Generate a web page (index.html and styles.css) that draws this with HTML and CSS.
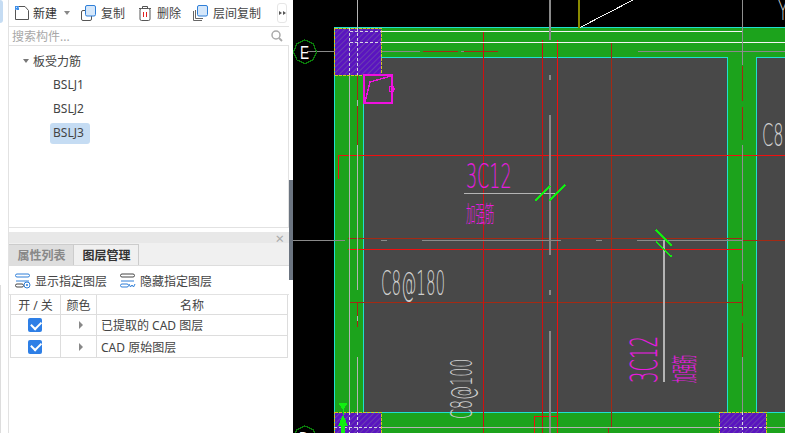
FILE: index.html
```html
<!DOCTYPE html>
<html lang="zh">
<head>
<meta charset="utf-8">
<title>图层管理</title>
<link rel="stylesheet" href="styles.css">
</head>
<body>
<div class="app">
  <aside class="side">
    <div class="rail"><div class="rail-sel"></div><div class="rail-line"></div></div>
    <div class="panel">
      <div class="toolbar">
        <button class="tool t-new">
          <svg width="16" height="16" viewBox="0 0 16 16"><path d="M1.500 3.500V14.500H14.500V5.500L11 1.500H5" fill="#fff" stroke="#555"/><path d="M1 1h4v4H1z" fill="#3f8fe8"/><path d="M2 2h1v1H2zM4 2h.5v1H4zM2 4h1v.5H2z" fill="#cfe4fa"/></svg>
          <span>新建</span><i class="caret"></i>
        </button>
        <button class="tool t-copy">
          <svg width="16" height="16" viewBox="0 0 16 16"><rect x="1.500" y="5.500" width="10" height="10" rx="1.500" fill="#fff" stroke="#555"/><rect x="5.500" y="0.500" width="10" height="10.500" rx="1.500" fill="#d5e7fa" stroke="#2f7fd8"/></svg>
          <span>复制</span>
        </button>
        <button class="tool t-del">
          <svg width="14" height="16" viewBox="0 0 14 16"><path d="M1 3.500H13M4.500 3V1.500H9.500V3" fill="none" stroke="#555"/><rect x="2" y="3.500" width="10" height="12" rx="1.500" fill="#fff" stroke="#555"/><path d="M5.500 7v5M8.500 7v5" stroke="#e02020"/></svg>
          <span>删除</span>
        </button>
        <button class="tool t-floor">
          <svg width="16" height="16" viewBox="0 0 16 16"><path d="M1.500 6V15.500H10M3.500 5V13.500H11" fill="none" stroke="#666"/><rect x="5.500" y="0.500" width="10" height="10.500" rx="1.500" fill="#d5e7fa" stroke="#2f7fd8"/></svg>
          <span>层间复制</span>
        </button>
        <div class="more"><i></i><i></i></div>
      </div>
      <div class="search">
        <span>搜索构件...</span>
        <svg width="12" height="12" viewBox="0 0 12 12"><circle cx="5" cy="5" r="4" fill="none" stroke="#aaa" stroke-width="1.500"/><path d="M8 8l3 3" stroke="#aaa" stroke-width="1.800"/></svg>
      </div>
      <div class="tree">
        <div class="tree-root"><i class="tree-caret"></i><span>板受力筋</span></div>
        <div class="leaf">BSLJ1</div>
        <div class="leaf">BSLJ2</div>
        <div class="leaf leaf-sel">BSLJ3</div>
      </div>
      <div class="gap"></div>
      <div class="dock-head"><span class="close">×</span></div>
      <div class="tabs">
        <div class="tab">属性列表</div>
        <div class="tab tab-on">图层管理</div>
      </div>
      <div class="layer-tools">
        <div class="ltool">
          <svg width="16" height="16" viewBox="0 0 16 16"><rect x="0.500" y="1" width="14" height="3" rx="1.500" fill="none" stroke="#2f7fd8"/><path d="M1 8h13" stroke="#2f7fd8"/><rect x="0.500" y="11" width="8" height="3" rx="1.500" fill="none" stroke="#444"/><circle cx="12" cy="12" r="3" fill="#fff" stroke="#2f7fd8"/><circle cx="12" cy="12" r="1" fill="#2f7fd8"/></svg>
          <span>显示指定图层</span>
        </div>
        <div class="ltool">
          <svg width="16" height="16" viewBox="0 0 16 16"><rect x="0.500" y="1" width="14" height="3" rx="1.500" fill="none" stroke="#444"/><path d="M1 8h13" stroke="#2f7fd8"/><rect x="0.500" y="11" width="8" height="3" rx="1.500" fill="none" stroke="#2f7fd8"/><path d="M9 11l1.500 3 1.500-2 1.500 2 1.500-3" fill="none" stroke="#2f7fd8"/></svg>
          <span>隐藏指定图层</span>
        </div>
      </div>
      <div class="grid">
        <div class="cell head">开 / 关</div><div class="cell head">颜色</div><div class="cell head">名称</div>
        <div class="cell"><span class="check"></span></div><div class="cell"><i class="arrow"></i></div><div class="cell name">已提取的 CAD 图层</div>
        <div class="cell"><span class="check"></span></div><div class="cell"><i class="arrow"></i></div><div class="cell name">CAD 原始图层</div>
      </div>
    </div>
    <div class="splitter"><i></i></div>
  </aside>
  <main class="cad">
    <svg class="drawing" width="492" height="433" viewBox="293 0 492 433">
      <defs>
        <pattern id="hatch" width="4" height="4" patternUnits="userSpaceOnUse" patternTransform="rotate(-45)">
          <rect width="4" height="4" fill="#5a14c0"/><rect width="4" height="1" fill="#6a3eb0"/>
        </pattern>
      </defs>
      <!-- slabs -->
      <rect x="363" y="57" width="365" height="376" fill="#484848"/>
      <rect x="757" y="57" width="28" height="376" fill="#484848"/>
      <!-- beams -->
      <path d="M334.500 433V28H785V57H756.500V412H785V433ZM363 57V412H727.500V57Z" fill="#1ca31c" fill-rule="evenodd"/>
      <g class="lines">
        <path class="cyan" d="M334.500 433V27.500H785M785 57.500H756.500V412.500H785M727.500 57.500V412.500H363.500V57.500H727.500"/>
        <!-- dark red under-lines -->
        <path class="dred" d="M423 51.500h35M464 51.500h34M638 51.500h35M679 51.500h35"/>
        <path class="dred" d="M611.500 42v385M348 238.500h394M742 240.500h43M349 302.500h393"/>
        <path class="dred" d="M357.500 65v80M357.500 302v25M742.500 66v35M742.500 107v33M742.500 284v32M742.500 323v34M608.500 427v6"/>
        <path class="red" d="M483.500 31.500h24M338.500 178.500V155.500H785M348 249.500h394M557.500 40v393M534.500 433v-17h23"/>
        <path class="red thin" d="M483.500 31v402M542.500 40v393"/>
        <!-- white and grey lines -->
        <path class="white" d="M381 31.500h361M381 42.500h404"/>
        <path class="grey" d="M307 51.500h113M461 51.500h3M638 51.500h147"/>
        <path class="grey" d="M293 240.500h52M381 240.500h6M422 240.500h139M596 240.500h6M637 240.500h105"/>
        <path class="greyv" d="M550 0v40M550 75v5M550 115v140M550 290v5M550 331v102"/>
        <path class="greyt" d="M742.500 0v65M742.500 145v136M742.500 357v76"/>
        <path class="light" d="M349.500 28v405M357.500 0v65M357.500 100v6M357.500 145v145M357.500 316v5M357.500 357v76"/>
        <path class="light wide" d="M664 240v142"/>
        <path class="light" d="M464 193.500h93M334 427.500h451"/>
        <path class="olive" d="M579 0v28"/>
        <path class="white" d="M580 27.500L633 0"/>
        <!-- columns -->
        <g class="col">
          <rect x="334.500" y="28.500" width="46.500" height="46.500"/>
          <rect x="334.500" y="412.500" width="46.500" height="30"/>
          <rect x="719.500" y="412.500" width="46.500" height="30"/>
        </g>
        <path class="dash" d="M349.500 31.500h32M349.500 42.500h32M349.500 28v47M357.500 28v47M349.500 412v21M357.500 412v21M334 427.500h47M719 427.500h47M742.500 412v21"/>
        <!-- green ticks -->
        <path class="tick" d="M535 201l15-15M549 201l16-16M656 230l16 16M656 241.500l16 15.500"/>
        <!-- magenta leader -->
        <rect class="box" x="364" y="75" width="28" height="28"/>
        <path class="mag" d="M365 102L370 82L391 76M389.500 86.500h3.500v5h-3.500zM393 89h2"/>
        <!-- axis bubbles -->
        <path class="axis" d="M305 40l8 3.500 3.500 8.500-3.500 8-8 3.500-8-3.500-3.500-8 3.500-8.500z"/>
        <path class="axis" d="M305 426l8 3.500 3.500 8.500-3.500 8-8 3.500-8-3.500-3.500-8 3.500-8.500z"/>
      </g>
      <text class="ax" transform="translate(300 59) scale(.8 1.100)">E</text>
      <text class="ax" transform="translate(299 445) scale(.8 1.100)">D</text>
      <!-- CAD text -->
      <text class="cadt magt" transform="translate(466 188) scale(.97 1.870)">3C12</text>
      <text class="cadc" transform="translate(466 222) scale(.47 1.150)">加强筋</text>
      <text class="cadt gryt" transform="translate(381 295) scale(.84 1.850)">C8@180</text>
      <text class="cadt gryt" transform="translate(472 419) rotate(-90) scale(.79 1.660)">C8@100</text>
      <text class="cadt magt" transform="translate(657 383) rotate(-90) scale(1 2.060)">3C12</text>
      <text class="cadc" transform="translate(694 383) rotate(-90) scale(.47 1.300)">加强筋</text>
      <text class="cadt gryt" transform="translate(762 146) scale(.9 1.800)">C8</text>
      <text class="cadt gryt" transform="translate(778 20) scale(.9 1.500)">Y</text>
      <!-- UCS arrow -->
      <path class="ucs" d="M339 403l4 6 4-6M343 409v6M343 416l-4 9h2.500v8h3v-8h2.500z"/>
    </svg>
  </main>
</div>
</body>
</html>
```

FILE: styles.css
```css
* { box-sizing: border-box; }
html, body { margin: 0; padding: 0; width: 785px; height: 433px; overflow: hidden; background: #000; }
body { font-family: "Noto Sans", "Noto Sans CJK SC", sans-serif; font-size: 12px; color: #333; }
.app { display: flex; width: 785px; height: 433px; }

.side { width: 293px; flex: none; display: flex; background: #fff; position: relative; }
.rail { width: 9px; flex: none; display: flex; flex-direction: column; border-right: 1px solid #e2e2e2; }
.rail-sel { width: 3px; height: 23px; background: #c5dcf3; border-radius: 0 3px 3px 0; }
.rail-line { width: 1px; margin: 262px 0 0 0; flex: 1; background: #ddd; }
.panel { width: 280px; flex: none; display: flex; flex-direction: column; }
.splitter { flex: 1; padding-top: 180px; }
.splitter i { display: block; width: 4px; height: 100px; background: #6b7480; }

.toolbar { height: 27px; flex: none; display: flex; align-items: center; border-bottom: 1px solid #e2e2e2; }
.tool { border: 0; background: none; padding: 0; display: flex; align-items: center; font: inherit; color: #444; height: 26px; }
.tool span { line-height: 16px; padding-top: 2px; }
.t-new { margin-left: 5px; }
.t-new span { margin-left: 3px; color: #333; }
.caret { width: 0; height: 0; margin-left: 7px; border: 3px solid transparent; border-top: 4px solid #888; border-bottom: 0; }
.t-copy { margin-left: 10px; }
.t-copy span { margin-left: 5px; }
.t-del { margin-left: 13px; }
.t-del span { margin-left: 5px; }
.t-floor { margin-left: 11px; }
.t-floor span { margin-left: 5px; }
.more { width: 10px; height: 20px; margin-left: 16px; border: 1px solid #e6e6e6; border-radius: 3px; display: flex; align-items: center; justify-content: center; }
.more i { width: 0; height: 0; border: 2.500px solid transparent; border-left: 3px solid #555; border-right: 0; margin: 0 .5px; }

.search { height: 19px; flex: none; display: flex; align-items: center; justify-content: space-between; padding: 0 6px 0 3px; border-bottom: 1px solid #e2e2e2; color: #a8a8a8; }
.tree { height: 182px; flex: none; border-bottom: 1px solid #e2e2e2; border-right: 1px solid #e2e2e2; padding-top: 3px; }
.tree-root { height: 23px; display: flex; align-items: center; padding-left: 14px; color: #444; }
.tree-caret { width: 0; height: 0; margin-right: 4px; border: 3px solid transparent; border-top: 4px solid #777; border-bottom: 0; }
.leaf { height: 21px; width: 40px; margin: 3px 0 0 41px; padding-left: 3px; line-height: 20px; color: #444; border-radius: 3px; }
.leaf-sel { background: #c5dcf3; }

.gap { height: 4px; flex: none; }
.dock-head { height: 11px; flex: none; background: #e8e8e8; position: relative; }
.close { position: absolute; right: 5px; top: -2px; font-size: 15px; line-height: 16px; color: #aaa; }
.tabs { height: 23px; flex: none; display: flex; background: #f0f0f0; border-bottom: 1px solid #ddd; padding-top: 1px; }
.tab { width: 65px; padding-left: 1px; text-align: center; line-height: 21px; font-weight: 700; color: #888; background: #dedede; border-right: 1px solid #ccc; border-top: 1px solid #ccc; }
.tab-on { color: #333; background: #f0f0f0; }
.layer-tools { height: 29px; flex: none; display: flex; align-items: center; gap: 13px; padding: 1px 0 0 6px; border-bottom: 1px solid #e2e2e2; }
.ltool { display: flex; align-items: center; gap: 4px; color: #444; }
.grid { display: grid; grid-template-columns: 50px 36px 191px; grid-template-rows: 20px 21px 21px; margin-left: 1px; border-left: 1px solid #ddd; border-bottom: 1px solid #ddd; width: 278px; }
.cell { display: flex; align-items: center; justify-content: center; border-right: 1px solid #ddd; border-bottom: 1px solid #ddd; color: #444; }
.grid .cell:nth-last-child(-n+3) { border-bottom: 0; }
.head { color: #444; }
.name { justify-content: flex-start; padding-left: 4px; }
.check { width: 14px; height: 14px; margin-right: 2px; background: #2e7fe6; border-radius: 2px; position: relative; }
.check::after { content: ""; position: absolute; left: 3px; top: 2.500px; width: 8px; height: 4.500px; border-left: 2px solid #fff; border-bottom: 2px solid #fff; transform: rotate(-45deg); }
.arrow { width: 0; height: 0; border: 4px solid transparent; border-left: 4px solid #888; border-right: 0; margin-left: 4px; }

.cad { flex: 1; background: #000; overflow: hidden; }
.drawing { display: block; }
.lines { shape-rendering: crispEdges; }
.cyan { fill: none; stroke: #1fe0d0; stroke-width: 1; }
.dred { fill: none; stroke: #a32a14; stroke-width: 1; }
.red { fill: none; stroke: #f00f0f; stroke-width: 1; }
.thin { stroke: #d01010; }
.white { fill: none; stroke: #f4f4f4; stroke-width: 1; }
.grey { fill: none; stroke: #8a8a8a; stroke-width: 1; }
.greyv { fill: none; stroke: #8a8a8a; stroke-width: 2; }
.greyt { fill: none; stroke: #8f8f8f; stroke-width: 1; }
.light { fill: none; stroke: #b4b4b4; stroke-width: 1; }
.wide { stroke-width: 2; }
.olive { fill: none; stroke: #8a8a00; stroke-width: 2; }
.col rect { fill: url(#hatch); stroke: #d4c420; stroke-width: 1; stroke-dasharray: 3 1; }
.dash { fill: none; stroke: #d8d4e4; stroke-width: 1; stroke-dasharray: 3 2; }
.tick { fill: none; stroke: #10ee10; stroke-width: 1.500; }
.box { fill: none; stroke: #f010e0; stroke-width: 2; }
.mag { fill: none; stroke: #f010e0; stroke-width: 1.300; }
.axis { fill: none; stroke: #0a7a0a; stroke-width: 1.300; }
.ax { font-family: "Liberation Sans", sans-serif; font-size: 17px; fill: #fff; }
.cadt { font-family: "DejaVu Sans", sans-serif; font-weight: 200; font-size: 18px; }
.magt { fill: #e81ae0; }
.gryt { fill: #d0d0d0; }
.cadc { font-family: "Noto Sans CJK SC", sans-serif; font-size: 20px; font-weight: 300; fill: #e81ae0; }
.ucs { fill: #10f010; stroke: #10f010; stroke-width: 1; shape-rendering: crispEdges; }
```
